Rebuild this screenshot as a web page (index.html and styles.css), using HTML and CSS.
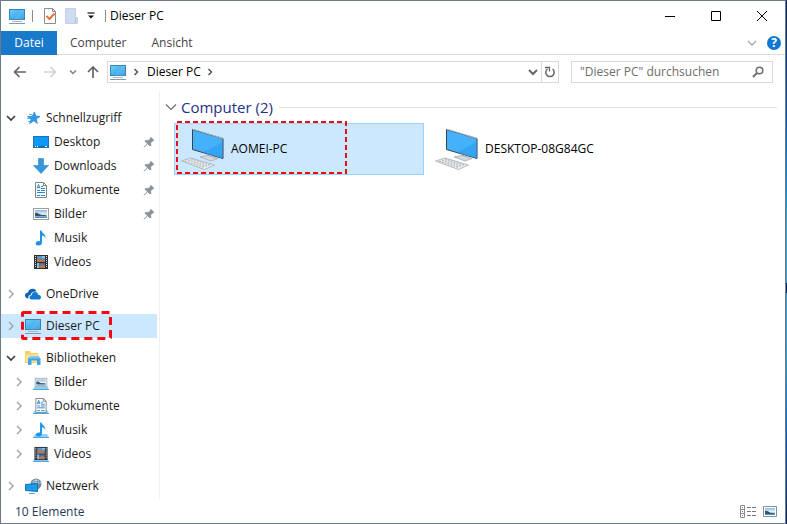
FILE: index.html
```html
<!DOCTYPE html>
<html lang="de">
<head>
    <meta charset="utf-8">
    <meta name="viewport" content="width=device-width, initial-scale=1.0">
    <title>Dieser PC</title>
    <link rel="stylesheet" href="styles.css">
</head>
<body>
<!-- icon set -->
<svg class="sprite" aria-hidden="true">
    <defs>
        <linearGradient id="screen" x1="0" y1="0" x2="1" y2="1">
            <stop offset="0" stop-color="#6fd0fb"/><stop offset="1" stop-color="#2196e3"/>
        </linearGradient>
        <linearGradient id="photo" x1="0" y1="0" x2="0" y2="1">
            <stop offset="0" stop-color="#8fb8dc"/><stop offset="0.5" stop-color="#e4f0f8"/><stop offset="1" stop-color="#4d7fa8"/>
        </linearGradient>
    </defs>
    <symbol id="i-pc" viewBox="0 0 18 16">
        <rect x="1.5" y="1.5" width="15" height="10" fill="url(#screen)" stroke="#3586b4"/>
        <path d="M6 11.5l7-9.500h3v9.500z" fill="#fff" opacity=".12"/>
        <path d="M4 13.500h10" stroke="#a9b8c2"/><path d="M1 15.500h16" stroke="#8199a8"/>
    </symbol>
    <symbol id="i-star" viewBox="0 0 18 16">
        <path d="M10.500 2l1 4 4.500.4-3.800 2.500 1.200 4.600-3.600-2.700-4.200 2.800 1.500-4.400L3.500 6.600l4.700-.4z" fill="#2f9be8" stroke="#1f7fcb" stroke-width=".7"/>
        <path d="M3 8.500h3M4 11.500h2M5 4.500h3" stroke="#5ab2ee"/>
    </symbol>
    <symbol id="i-desktop" viewBox="0 0 18 16">
        <rect x="1.500" y="2.500" width="15" height="11" fill="#0f97f5" stroke="#1a75b8"/>
        <path d="M2 12.500h14" stroke="#1467a8"/><path d="M3 12.500h1m1 0h1m7 0h2" stroke="#fff"/>
    </symbol>
    <symbol id="i-down" viewBox="0 0 18 16">
        <path d="M6.500 .5h5v7h5L9 15.500 1.500 7.500h5z" fill="#3697dd" stroke="#2a84c9" stroke-width=".6"/>
    </symbol>
    <symbol id="i-doc" viewBox="0 0 18 16">
        <path d="M3.500 .5h8l3 3v12h-11z" fill="#fff" stroke="#7d858b"/>
        <path d="M11.500 .5v3h3" fill="none" stroke="#7d858b"/>
        <path d="M5 6.500l1.500-4 1.500 4M5.500 5.500h2M9 4.500h2M9 6.500h4M5 8.500h3M9 8.500h4M5 10.500h8M5 13.500h3M9 13.500h4" fill="none" stroke="#2f86c4"/>
    </symbol>
    <symbol id="i-image" viewBox="0 0 18 16">
        <rect x="1.500" y="2.500" width="15" height="11" fill="#fff" stroke="#999fa4"/>
        <path d="M3 4h12v8H3z" fill="url(#photo)"/>
        <path d="M3 7c3-1 4 2 7 2s3 0 5 1H3z" fill="#37566d"/>
    </symbol>
    <symbol id="i-music" viewBox="0 0 18 16">
        <path d="M8 .5h1.500c.5 3 4.500 3.500 4 8-.3-1.600-1.800-2.800-3.500-3v7c0 2-1.500 3-3.500 3s-3-1-2.800-2.300C4 11.500 6 10.800 8 11.200z" fill="#1a93e8"/>
    </symbol>
    <symbol id="i-video" viewBox="0 0 18 16">
        <path d="M2 1h14v14H2z" fill="#2b2f35"/>
        <path d="M3.500 2v12M14.500 2v12" stroke="#e4e6e8" stroke-dasharray="1 1"/>
        <path d="M5 2h8v6H5z" fill="#5d93ca"/><path d="M5 9h8v5H5z" fill="#466fa4"/>
        <path d="M5 6l3-2 5 3v1H5zM7 13l3-3 3 2v2H7z" fill="#b87945"/>
        <path d="M5 9h2v5H5zM10 2h3v2h-3z" fill="#8fc2e9"/>
    </symbol>
    <symbol id="i-cloud" viewBox="0 0 18 16">
        <path d="M1 9.500C1 7.500 2.500 6.500 4 6.500 4.500 3.500 7 2.500 9 2.800c2 .2 3 1.500 3.500 2.700C8.500 5 7 7 6.700 8.800 4.500 9 4 11 4.500 12.500 2 12.500 1 11 1 9.500z" fill="#0e62b5"/>
        <path d="M5.500 11.500c0-1.700 1.200-2.300 2.300-2.300 0-2 1.500-3.200 3.200-3.200s3 1.200 3.200 2.700c1.800 0 2.800 1 2.800 2.500S16 13.500 15 13.500H7.500c-1.200 0-2-.8-2-2z" fill="#1479d2"/>
    </symbol>
    <symbol id="i-lib" viewBox="0 0 18 16">
        <path d="M1 1h5l1 2h7v10H1z" fill="#f5cf6a"/>
        <path d="M2 5l13-1v8H2z" fill="#fbe39a"/>
        <path d="M4 15V8.500L6 6.500h8.500l2 2V15h-3.500v-4.500H7.500V15z" fill="#43a4e4"/>
        <path d="M4 8.500l2-2h8.500l2 2z" fill="#7cc5f2"/>
    </symbol>
    <symbol id="i-net" viewBox="0 0 18 16">
        <circle cx="12" cy="6" r="5.500" fill="#6d8ca4"/>
        <path d="M9 2c2 1 4 0 6 1M8 4.500c2-2 5 2 9 0M12 1v9" fill="none" stroke="#b9d0df"/>
        <path d="M1.500 6.500l12-1v8l-12-1z" fill="#1c9be8" stroke="#176fae"/>
        <path d="M5 15.500h6" stroke="#53a6d8"/>
    </symbol>
    <symbol id="i-base" viewBox="0 0 18 16">
        <path d="M3 12h12l2 3.500H1z" fill="#8fd0f6"/><path d="M1 15.500h16" stroke="#4aa9e4"/>
    </symbol>
    <symbol id="i-pin" viewBox="0 0 12 12">
        <path d="M7.500 .5l4 4-1.500.5-2 2 .3 2.700L7 10.500 4.500 8 1 11.500.5 11 4 7.500 1.500 5l1-1 2.800.2 2-2z" fill="#8a949b"/>
    </symbol>
    <symbol id="i-open" viewBox="0 0 10 10"><path d="M1 3l4 4 4-4" fill="none" stroke="#404040" stroke-width="1.700"/></symbol>
    <symbol id="i-closed" viewBox="0 0 10 10"><path d="M3 1l4 4-4 4" fill="none" stroke="#a3a6a8" stroke-width="1.500"/></symbol>
    <symbol id="i-crumb" viewBox="0 0 10 10"><path d="M3.500 2l3 3-3 3" fill="none" stroke="#555" stroke-width="1.500"/></symbol>
    <symbol id="i-bigpc" viewBox="0 0 44 42">
        <path d="M11.500 1.500l30.500 9v20l-30.500-9z" fill="#45b1fb" stroke="#36434d"/>
        <path d="M22 24.500L41.500 14v16.500z" fill="#2b9bf0" opacity=".6"/>
        <path d="M11.500 1l31 9.500" stroke="#b5c0c8"/>
        <path d="M27 26.500l5 1.500v3h-5z" fill="#b3bcc3"/>
        <path d="M19 29l8-1.500 10 3-7 2.500z" fill="#d4dade" stroke="#9aa4ab" stroke-width=".7"/>
        <path d="M.5 33L10 30l23.500 7-10 4.500z" fill="#eceeef" stroke="#a5abb0" stroke-width=".8"/>
        <path d="M4 33l20 6.500M7 32l20 6.500M10 31l20 6.500" stroke="#b4babf" stroke-width="1.200" stroke-dasharray="2 1"/>
    </symbol>
</svg>

<div class="window">
    <header class="titlebar">
        <svg class="icon title-pc"><use href="#i-pc"/></svg>
        <span class="divider"></span>
        <button class="quick" aria-label="Eigenschaften">
            <svg width="14" height="16" viewBox="0 0 14 16"><path d="M1.500 .5h8l3 3v12h-11z" fill="#fff" stroke="#8c8c8c"/><path d="M9.500 .5v3h3" fill="none" stroke="#8c8c8c"/><path d="M3.500 8l3 3 5-5.500" fill="none" stroke="#e4703a" stroke-width="2"/></svg>
        </button>
        <button class="quick" aria-label="Neuer Ordner">
            <svg width="14" height="16" viewBox="0 0 14 16"><path d="M.5 .5h10v9h2v6h-12z" fill="#cfdcf0" stroke="#c2d0e5"/><path d="M10.500 10v5" stroke="#aebfd8"/></svg>
        </button>
        <button class="quick more" aria-label="Anpassen">
            <svg width="8" height="8" viewBox="0 0 8 8"><path d="M.5 1h7" stroke="#111" stroke-width="1.200"/><path d="M1 3.500h6L4 6.500z" fill="#111"/></svg>
        </button>
        <span class="divider"></span>
        <h1 class="title">Dieser PC</h1>
        <div class="controls">
            <button aria-label="Minimieren"><svg width="12" height="12" viewBox="0 0 12 12"><path d="M1 6.500h10" stroke="#000"/></svg></button>
            <button aria-label="Maximieren"><svg width="12" height="12" viewBox="0 0 12 12"><path d="M1.500 1.500h9v9h-9z" fill="none" stroke="#000"/></svg></button>
            <button aria-label="Schließen"><svg width="12" height="12" viewBox="0 0 12 12"><path d="M1 1l10 10M11 1L1 11" stroke="#000"/></svg></button>
        </div>
    </header>

    <nav class="ribbon">
        <button class="tab file">Datei</button>
        <button class="tab">Computer</button>
        <button class="tab">Ansicht</button>
        <button class="expand" aria-label="Menüband erweitern"><svg width="10" height="10" viewBox="0 0 10 10"><path d="M1 3l4 4 4-4" fill="none" stroke="#a0a5aa" stroke-width="1.300"/></svg></button>
        <button class="help" aria-label="Hilfe">?</button>
    </nav>

    <div class="toolbar">
        <div class="history">
            <button class="nav" aria-label="Zurück"><svg width="14" height="12" viewBox="0 0 14 12"><path d="M13 6H2M6.500 1L1.500 6l5 5" fill="none" stroke="#666" stroke-width="1.700"/></svg></button>
            <button class="nav" aria-label="Vorwärts"><svg width="14" height="12" viewBox="0 0 14 12"><path d="M1 6h11M7.500 1l5 5-5 5" fill="none" stroke="#d2d2d2" stroke-width="1.500"/></svg></button>
        </div>
        <button class="nav small" aria-label="Verlauf"><svg width="8" height="8" viewBox="0 0 8 8"><path d="M1 2.500l3 3 3-3" fill="none" stroke="#808080" stroke-width="1.500"/></svg></button>
        <button class="nav small" aria-label="Nach oben"><svg width="12" height="14" viewBox="0 0 12 14"><path d="M6 13V2M1 7l5-5 5 5" fill="none" stroke="#666" stroke-width="1.700"/></svg></button>
        <div class="address">
            <svg class="icon"><use href="#i-pc"/></svg>
            <svg class="chev"><use href="#i-crumb"/></svg>
            <a href="#" class="crumb">Dieser PC</a>
            <svg class="chev"><use href="#i-crumb"/></svg>
            <button class="drop" aria-label="Adressliste"><svg width="10" height="10" viewBox="0 0 10 10"><path d="M1 3l4 4 4-4" fill="none" stroke="#666" stroke-width="2"/></svg></button>
            <button class="reload" aria-label="Aktualisieren"><svg width="12" height="12" viewBox="0 0 12 12"><path d="M3.500 3A4.200 4.200 0 1 0 8.500 3" fill="none" stroke="#666" stroke-width="1.500"/><path d="M1 1.500h4.500v4" fill="none" stroke="#666" stroke-width="1.300"/></svg></button>
        </div>
        <div class="search">
            <input type="text" placeholder="&quot;Dieser PC&quot; durchsuchen" aria-label="Dieser PC durchsuchen">
            <svg width="12" height="12" viewBox="0 0 12 12"><circle cx="7.500" cy="4.500" r="3.300" fill="none" stroke="#707070" stroke-width="1.600"/><path d="M5 7L1 11" stroke="#707070" stroke-width="2"/></svg>
        </div>
    </div>

    <div class="main">
        <nav class="sidebar">
            <ul class="tree">
                <li class="row"><button class="toggle" aria-label="Schnellzugriff"><svg class="chev"><use href="#i-open"/></svg></button><a href="#"><svg class="icon"><use href="#i-star"/></svg>Schnellzugriff</a></li>
                <li class="row child"><span class="toggle"></span><a href="#"><svg class="icon"><use href="#i-desktop"/></svg>Desktop</a><svg class="pin"><use href="#i-pin"/></svg></li>
                <li class="row child"><span class="toggle"></span><a href="#"><svg class="icon"><use href="#i-down"/></svg>Downloads</a><svg class="pin"><use href="#i-pin"/></svg></li>
                <li class="row child"><span class="toggle"></span><a href="#"><svg class="icon"><use href="#i-doc"/></svg>Dokumente</a><svg class="pin"><use href="#i-pin"/></svg></li>
                <li class="row child"><span class="toggle"></span><a href="#"><svg class="icon"><use href="#i-image"/></svg>Bilder</a><svg class="pin"><use href="#i-pin"/></svg></li>
                <li class="row child"><span class="toggle"></span><a href="#"><svg class="icon"><use href="#i-music"/></svg>Musik</a></li>
                <li class="row child"><span class="toggle"></span><a href="#"><svg class="icon"><use href="#i-video"/></svg>Videos</a></li>
            </ul>
            <ul class="tree">
                <li class="row"><button class="toggle" aria-label="OneDrive"><svg class="chev"><use href="#i-closed"/></svg></button><a href="#"><svg class="icon"><use href="#i-cloud"/></svg>OneDrive</a></li>
            </ul>
            <ul class="tree">
                <li class="row selected"><button class="toggle" aria-label="Dieser PC"><svg class="chev"><use href="#i-closed"/></svg></button><a href="#"><svg class="icon"><use href="#i-pc"/></svg>Dieser PC</a>
                    <svg class="mark mark-tree"><rect x="1.500" y="1.500" width="88" height="26" rx="1" stroke-width="3" stroke-dasharray="8 5"/></svg></li>
            </ul>
            <ul class="tree">
                <li class="row"><button class="toggle" aria-label="Bibliotheken"><svg class="chev"><use href="#i-open"/></svg></button><a href="#"><svg class="icon"><use href="#i-lib"/></svg>Bibliotheken</a></li>
                <li class="row child"><button class="toggle" aria-label="Bilder"><svg class="chev"><use href="#i-closed"/></svg></button><a href="#"><svg class="icon" viewBox="0 0 18 16"><use href="#i-base" width="18" height="16"/><use href="#i-image" x="2" y="2" width="14" height="13"/></svg>Bilder</a></li>
                <li class="row child"><button class="toggle" aria-label="Dokumente"><svg class="chev"><use href="#i-closed"/></svg></button><a href="#"><svg class="icon" viewBox="0 0 18 16"><use href="#i-base" width="18" height="16"/><use href="#i-doc" width="18" height="15"/></svg>Dokumente</a></li>
                <li class="row child"><button class="toggle" aria-label="Musik"><svg class="chev"><use href="#i-closed"/></svg></button><a href="#"><svg class="icon" viewBox="0 0 18 16"><use href="#i-base" width="18" height="16"/><use href="#i-music" width="18" height="15"/></svg>Musik</a></li>
                <li class="row child"><button class="toggle" aria-label="Videos"><svg class="chev"><use href="#i-closed"/></svg></button><a href="#"><svg class="icon" viewBox="0 0 18 16"><use href="#i-base" width="18" height="16"/><use href="#i-video" width="18" height="15"/></svg>Videos</a></li>
            </ul>
            <ul class="tree">
                <li class="row"><button class="toggle" aria-label="Netzwerk"><svg class="chev"><use href="#i-closed"/></svg></button><a href="#"><svg class="icon"><use href="#i-net"/></svg>Netzwerk</a></li>
            </ul>
        </nav>

        <section class="content">
            <h2 class="group"><svg width="12" height="12" viewBox="0 0 12 12"><path d="M1 3.500l5 5 5-5" fill="none" stroke="#6a6f74" stroke-width="1.200"/></svg>Computer (2)</h2>
            <div class="tiles">
                <a href="#" class="tile active"><svg class="bigpc"><use href="#i-bigpc"/></svg>AOMEI-PC
                    <svg class="mark mark-tile"><rect x="1" y="1" width="169" height="51" stroke-width="2" stroke-dasharray="5 3"/></svg></a>
                <a href="#" class="tile"><svg class="bigpc"><use href="#i-bigpc"/></svg>DESKTOP-08G84GC</a>
            </div>
        </section>
    </div>

    <footer class="status">
        <span class="count">10 Elemente</span>
        <button class="view" aria-label="Details"><svg width="16" height="14" viewBox="0 0 16 14"><path d="M.5 .5h4v12h-4zM.5 4.500h4M.5 8.500h4" fill="none" stroke="#8b8b8b"/><path d="M2 2.500h1M2 6.500h1M2 10.500h1M7 2.500h4m1 0h4M7 6.500h4m1 0h4M7 10.500h4m1 0h4" stroke="#777"/></svg></button>
        <button class="view" aria-label="Große Symbole"><svg width="14" height="12" viewBox="0 0 14 12"><path d="M.5 .5h13v10H.5z" fill="#fff" stroke="#7894a8"/><path d="M2 2h10v7H2z" fill="url(#photo)"/><path d="M2 5c3-1 4 2 6 2s3 0 4 1H2z" fill="#37566d"/></svg></button>
    </footer>
</div>
</body>
</html>
```
FILE: styles.css
```css
* {box-sizing: border-box;}
body {
    margin: 0;
    height: 100vh;
    padding-right: 1px;
    background: linear-gradient(#06225c 0, #0a4f9e 17%, #0a74c8 30%, #0a9ad8 38%, #3b9ad8 42%, #3b9ad8 54%, #0b2f6e 54%, #0b2f6e 56%, #3b9ad8 56%, #2f93d6 70%, #0a6cc8 80%, #0a4f9e 90%, #06225c);
    font-family: "Open Sans", "Noto Sans", sans-serif;
    font-size: 12px;
    line-height: 16px;
    color: #1a1a1a;
}
button {border: 0;padding: 0;margin: 0;background: none;font: inherit;color: inherit;display: flex;align-items: center;justify-content: center;}
a {color: inherit;text-decoration: none;}
svg {display: block;flex: none;}
.sprite {position: absolute;width: 0;height: 0;}
.icon {width: 18px;height: 16px;}
.chev {width: 10px;height: 10px;}
.window {
    display: flex;
    flex-direction: column;
    height: 100%;
    background: #fff;
    border: 1px solid #6d7a88;
}

/* title bar */
.titlebar {display: flex;align-items: center;height: 30px;padding-left: 7px;}
.divider {width: 1px;height: 12px;background: #8c8c8c;margin: 0 6px;}
.title-pc + .divider {margin-right: 10px;}
.quick {width: 14px;margin-right: 8px;}
.quick.more {width: 8px;margin-right: 4px;}
.quick.more + .divider {margin-right: 4px;}
.title {margin: 0;font-size: 12px;font-weight: normal;color: #000;}
.controls {display: flex;margin-left: auto;}
.controls button {width: 46px;height: 30px;}

/* ribbon tabs */
.ribbon {display: flex;align-items: center;height: 24px;padding-right: 4px;border-bottom: 1px solid #dadbdc;color: #444;}
.tab {height: 24px;padding: 0 12px;margin-right: 1px;}
.tab.file {width: 56px;background: #1979ca;color: #fff;}
.expand {width: 14px;margin-left: auto;margin-right: 8px;}
.help {width: 14px;height: 14px;border-radius: 50%;background: #0f78d4;color: #fff;font-weight: bold;}

/* address row */
.toolbar {display: flex;align-items: center;padding: 6px 12px 8px;}
.history {display: flex;gap: 16px;margin-right: 10px;}
.nav {width: 14px;}
.nav.small {width: 12px;margin-right: 8px;}
.address, .search {display: flex;align-items: center;height: 22px;border: 1px solid #d9d9d9;}
.address {flex: 1;margin-right: 12px;padding-left: 1px;color: #000;}
.address > .chev {margin: 0 6px 0 4px;}
.drop {width: 16px;margin-left: auto;}
.reload {width: 17px;height: 20px;border-left: 1px solid #d9d9d9;}
.search {width: 202px;padding: 0 8px;}
.search input {flex: 1;min-width: 0;border: 0;padding: 0;font: inherit;background: none;outline: 0;}
.search input::placeholder {color: #6d6d6d;opacity: 1;}

/* navigation tree */
.main {display: flex;flex: 1;min-height: 0;}
.sidebar {width: 159px;padding: 15px 2px 0 0;border-right: 1px solid #f0f0f0;}
.tree {list-style: none;margin: 0 0 8px;padding: 0;}
.row {display: flex;align-items: center;height: 24px;position: relative;}
.row.child {padding-left: 8px;}
.row a {display: flex;align-items: center;gap: 4px;flex: 1;}
.row.selected {background: #cce8ff;}
.toggle {width: 20px;height: 24px;margin-right: 3px;}
.pin {width: 12px;height: 12px;margin-right: 2px;}

/* content */
.content {flex: 1;padding: 6px 8px 0 5px;}
.group {display: flex;align-items: center;gap: 4px;margin: 0 0 6px;font-size: 15px;line-height: 20px;font-weight: normal;color: #1e3287;}
.group::after {content: "";flex: 1;height: 1px;background: #e2e2e2;margin-left: 2px;}
.tiles {display: grid;grid-template-columns: repeat(auto-fill, 250px);gap: 4px;padding-left: 9px;}
.tile {display: flex;align-items: center;gap: 6px;height: 52px;padding: 0 6px;border: 1px solid transparent;position: relative;color: #000;}
.tile.active {background: #cce8ff;border-color: #99d1ff;}
.bigpc {width: 44px;height: 42px;}

/* red highlight frames */
.mark {position: absolute;pointer-events: none;fill: none;stroke: #fb0511;}
.mark-tree {left: 20px;top: -3px;width: 91px;height: 29px;}
.mark-tile {left: 1px;top: -3px;width: 171px;height: 53px;}

/* status bar */
.status {display: flex;align-items: center;height: 24px;padding: 2px 7px 0 14px;}
.count {margin-right: auto;color: #1e395b;}
.view {width: 16px;margin-left: 6px;}
```
